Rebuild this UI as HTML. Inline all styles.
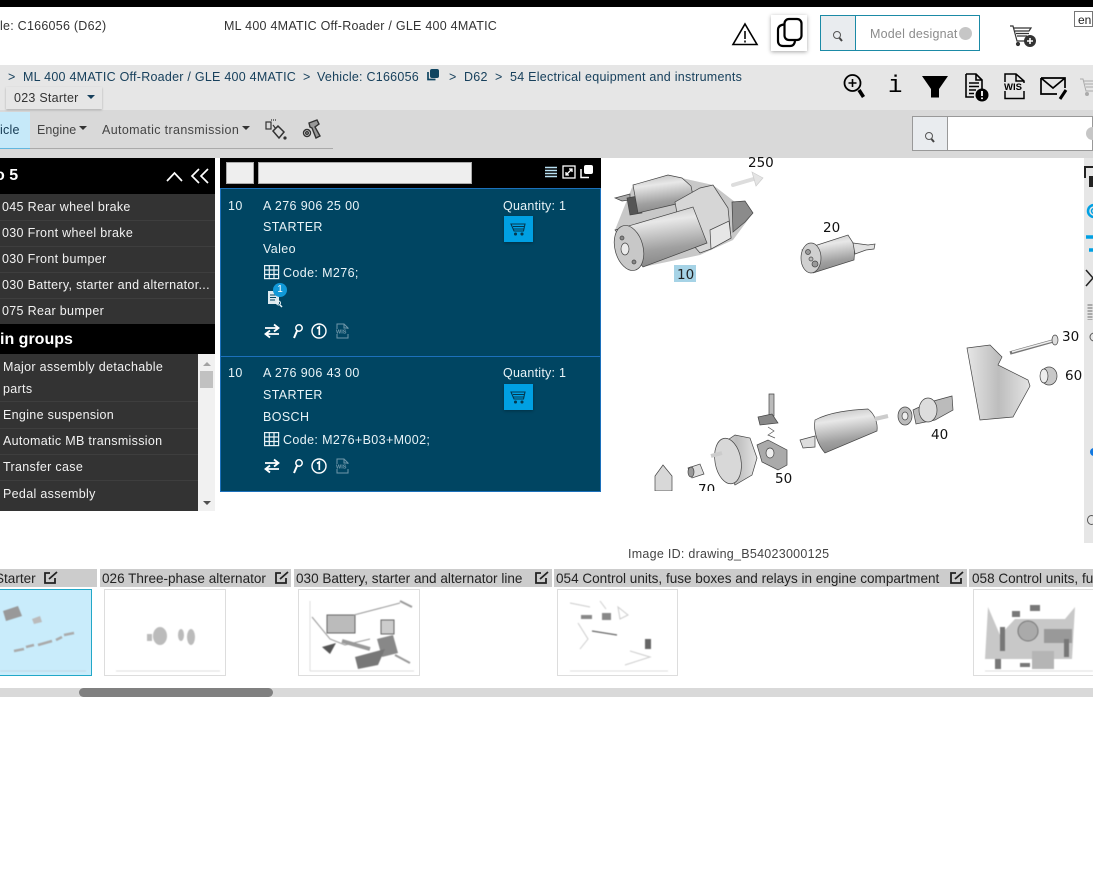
<!DOCTYPE html>
<html><head><meta charset="utf-8"><style>
html,body{margin:0;padding:0;background:#fff}
body{width:1093px;height:872px;position:relative;overflow:hidden;font-family:"Liberation Sans",sans-serif;font-size:12.5px;color:#333}
.a,.t{position:absolute}
.t{white-space:nowrap;line-height:16px;letter-spacing:.25px}
.n{color:#17405c}
.w{color:#f2f2f2;letter-spacing:.32px}
.p{color:#e8f3f7;letter-spacing:.38px}
.l{font-size:13.55px;color:#222;line-height:18px;letter-spacing:0}
.h{background:#ccc;height:18px;top:569px}
.b{position:absolute;top:589px;height:85px;border:1px solid #ddd;background:#fff}
svg{position:absolute;overflow:visible}
</style></head><body>
<div class="a" style="left:0;top:0;width:1093px;height:7px;background:#000"></div>
<div class="t" style="left:0;top:18px;color:#333">le: C166056 (D62)</div>
<div class="t" style="left:224px;top:18px;color:#333">ML 400 4MATIC Off-Roader / GLE 400 4MATIC</div>

<svg style="left:732px;top:22px" width="26" height="24"><path d="M13 2 L25 22.500 H1 Z" fill="none" stroke="#000" stroke-width="1.600"/><path d="M13 9v8M13 18.500v2" stroke="#222" stroke-width="1.800"/></svg>
<div class="a" style="left:771px;top:15px;width:36px;height:36px;background:#fff;box-shadow:0 1px 4px rgba(0,0,0,.35)"></div>
<svg style="left:776px;top:17px" width="28" height="32" fill="none" stroke="#000" stroke-width="2.200"><rect x="8.500" y="2" width="17" height="21" rx="4.500"/><path d="M8 7.500C3.500 8 2 10 2 13V24C2 27 4 29 7 29H14C17 29 18.500 27.500 19 24"/></svg>

<div class="a" style="left:820px;top:15px;width:158px;height:34px;border:1px solid #1b8aa6"></div>
<div class="a" style="left:821px;top:16px;width:34px;height:34px;background:#e9ecef;border-right:1px solid #1b8aa6"></div>
<svg style="left:832px;top:30px" width="12" height="13" fill="none" stroke="#555"><circle cx="5" cy="5" r="3.500"/><path d="M7.500 8L10 11" stroke-width="2" stroke="#444"/></svg>
<div class="t" style="left:870px;top:26px;color:#8b8b8b;width:89px;overflow:hidden;letter-spacing:.2px">Model designat</div>
<div class="a" style="left:959px;top:27px;width:13px;height:13px;border-radius:50%;background:#c6c6c6"></div>
<svg style="left:1009px;top:24px" width="30" height="25" fill="none" stroke="#333" stroke-width="1.200"><path d="M1 2H4L8 17H20M5 4H22L20 7H6M7 9.500H20M8 12H18"/><circle cx="9" cy="20" r="1.500" fill="#333"/><circle cx="21" cy="17" r="6" fill="#333" stroke="none"/><path d="M21 14v6M18 17h6" stroke="#fff" stroke-width="1.600"/></svg>
<div class="a" style="left:1074px;top:11px;width:19px;height:16px;border:1px solid #767676;background:#fff;font-size:12px;line-height:16px;color:#222;padding-left:3px;box-sizing:border-box">en</div>

<div class="a" style="left:0;top:65px;width:1093px;height:45px;background:#e6e6e6"></div>
<div class="a" style="left:0;top:110px;width:1093px;height:48px;background:#d9d9d9"></div>
<div class="t n" style="left:8px;top:69px">&gt;</div>
<div class="t n" style="left:23px;top:69px">ML 400 4MATIC Off-Roader / GLE 400 4MATIC</div>
<div class="t n" style="left:303px;top:69px">&gt;</div>
<div class="t n" style="left:317px;top:69px">Vehicle: C166056</div>
<svg style="left:426px;top:68px" width="14" height="14"><rect x="4" y="1" width="9" height="9" rx="2" fill="#0f4460"/><path d="M2 4V11.500H9.500" fill="none" stroke="#0f4460" stroke-width="1.700"/></svg>
<div class="t n" style="left:449px;top:69px">&gt;</div>
<div class="t n" style="left:464px;top:69px">D62</div>
<div class="t n" style="left:495px;top:69px">&gt;</div>
<div class="t n" style="left:510px;top:69px">54 Electrical equipment and instruments</div>
<div class="a" style="left:6px;top:87px;width:96px;height:22px;background:#e6e6e6;box-shadow:0 1px 2px rgba(0,0,0,.25)"></div>
<div class="t n" style="left:14px;top:90px;color:#333">023 Starter</div>
<div class="a" style="left:87px;top:95px;border:4px solid transparent;border-top:4px solid #17405c;border-bottom:0"></div>

<svg style="left:843px;top:73px" width="22" height="27" fill="none" stroke="#000"><circle cx="9.500" cy="10" r="8" stroke-width="1.800"/><path d="M9.500 6v8M5.500 10h8" stroke-width="1.600"/><path d="M16 17L20.500 24" stroke-width="3.600"/></svg>
<div class="t" style="left:888px;top:74px;font:24px/26px 'Liberation Mono',monospace;color:#000;letter-spacing:0">i</div>
<svg style="left:922px;top:76px" width="26" height="22"><path d="M0 0H26L17 13V21.500H9V13Z" fill="#000"/></svg>
<svg style="left:965px;top:73px" width="26" height="29" fill="none" stroke="#000" stroke-width="1.600"><path d="M1 1H11L17 7V19M11 1V7H17M1 1V24H9M4 10H14M4 13.500H14M4 17H11M4 20.500H9"/><circle cx="17" cy="22" r="6.500" fill="#000" stroke="none"/><path d="M17 18v5M17 24.500v1.600" stroke="#fff" stroke-width="1.800"/></svg>
<svg style="left:1004px;top:73px" width="22" height="27" fill="none" stroke="#000" stroke-width="1.500"><path d="M1 9V1H12L20 8V10M12 1V8H20M1 18V25.500H20V18"/><text x="0" y="17" font-family="Liberation Sans,sans-serif" font-size="9.500" font-weight="700" fill="#000" stroke="none">WIS</text></svg>
<svg style="left:1040px;top:76px" width="28" height="25" fill="none" stroke="#000" stroke-width="1.700"><path d="M1 2H25V12M1 2V18H17M1 2L13 12L25 2"/><path d="M20 23L26 14" stroke-width="3"/></svg>
<svg style="left:1080px;top:78px" width="16" height="20" fill="none" stroke="#aaa"><path d="M0 1H3L6 13H15M4 3H20M5 6H18M6 9H16"/><circle cx="7" cy="16" r="1.500" fill="#aaa"/></svg>

<div class="a" style="left:0;top:112px;width:30px;height:37px;background:#c6e9f9"></div>
<div class="a" style="left:0;top:148px;width:333px;height:1px;background:#aaa"></div>
<div class="a" style="left:0;top:148px;width:30px;height:1px;background:#62b7df"></div>
<div class="t n" style="left:0;top:122px;color:#163a52">icle</div>
<div class="t" style="left:37px;top:122px;color:#444;letter-spacing:.05px">Engine</div>
<div class="a" style="left:79px;top:126px;border:4px solid transparent;border-top:4px solid #333;border-bottom:0"></div>
<div class="t" style="left:102px;top:122px;color:#444;letter-spacing:.36px">Automatic transmission</div>
<div class="a" style="left:242px;top:126px;border:4px solid transparent;border-top:4px solid #333;border-bottom:0"></div>
<svg style="left:264px;top:118px" width="24" height="24" fill="none" stroke="#333" stroke-width="1.200"><rect x="2" y="4" width="5" height="7"/><path d="M7 2H12" stroke-dasharray="1 1"/><path d="M9 13L14 8L20 14L15 20Z" stroke-width="1.500"/><path d="M9 7L12 11" stroke="#333"/><circle cx="21" cy="20" r="1" fill="#333"/></svg>
<svg style="left:301px;top:118px" width="22" height="24" fill="none" stroke="#333" stroke-width="1.400"><path d="M8 5L16 2L18 6L14 9L19 18L15 20L11 10L9 9Z" fill="#999"/><circle cx="6" cy="15" r="3.500"/><circle cx="6" cy="15" r="1.300"/></svg>

<div class="a" style="left:912px;top:116px;width:181px;height:35px;background:#fff;border:1px solid #999;box-sizing:border-box"></div>
<div class="a" style="left:913px;top:117px;width:34px;height:33px;background:#e9ecef;border-right:1px solid #999"></div>
<svg style="left:924px;top:131px" width="12" height="13" fill="none" stroke="#555"><circle cx="5" cy="5" r="3.500"/><path d="M7.500 8L10 11" stroke-width="2" stroke="#444"/></svg>
<div class="a" style="left:1086px;top:127px;width:13px;height:13px;border-radius:50%;background:#c6c6c6"></div>

<div class="a" style="left:0;top:158px;width:215px;height:36px;background:#000"></div>
<div class="t" style="left:-5px;top:167px;font-size:16px;font-weight:700;color:#fff;line-height:18px;letter-spacing:0">o 5</div>
<svg style="left:166px;top:168px" width="44" height="16" fill="none" stroke="#fff" stroke-width="1.700"><path d="M1 13L8.500 5L16 13M33 1L26 8L33 15M42 1L35 8L42 15"/></svg>
<div class="a" style="left:0;top:194px;width:215px;height:130px;background:#333"></div>
<div class="t w" style="left:2px;top:199px">045 Rear wheel brake</div>
<div class="a" style="left:0;top:220px;width:215px;height:1px;background:#3e3e3e"></div>
<div class="t w" style="left:2px;top:225px">030 Front wheel brake</div>
<div class="a" style="left:0;top:246px;width:215px;height:1px;background:#3e3e3e"></div>
<div class="t w" style="left:2px;top:251px">030 Front bumper</div>
<div class="a" style="left:0;top:272px;width:215px;height:1px;background:#3e3e3e"></div>
<div class="t w" style="left:2px;top:277px">030 Battery, starter and alternator...</div>
<div class="a" style="left:0;top:298px;width:215px;height:1px;background:#3e3e3e"></div>
<div class="t w" style="left:2px;top:303px">075 Rear bumper</div>
<div class="a" style="left:0;top:324px;width:215px;height:30px;background:#000"></div>
<div class="t" style="left:0;top:331px;font-size:16px;font-weight:700;color:#fff;line-height:18px;letter-spacing:0">in groups</div>
<div class="a" style="left:0;top:354px;width:198px;height:157px;background:#333"></div>
<div class="a" style="left:198px;top:354px;width:17px;height:157px;background:#f1f1f1"></div>
<div class="a" style="left:200px;top:371px;width:13px;height:17px;background:#c1c1c1"></div>
<div class="a" style="left:203px;top:362px;border:4px solid transparent;border-bottom:4px solid #a3a3a3;border-top:0"></div>
<div class="a" style="left:203px;top:501px;border:4px solid transparent;border-top:4px solid #505050;border-bottom:0"></div>
<div class="t w" style="left:3px;top:359px">Major assembly detachable</div>
<div class="t w" style="left:3px;top:381px">parts</div>
<div class="a" style="left:0;top:401px;width:198px;height:1px;background:#3e3e3e"></div>
<div class="t w" style="left:3px;top:407px">Engine suspension</div>
<div class="a" style="left:0;top:428px;width:198px;height:1px;background:#3e3e3e"></div>
<div class="t w" style="left:3px;top:433px">Automatic MB transmission</div>
<div class="a" style="left:0;top:454px;width:198px;height:1px;background:#3e3e3e"></div>
<div class="t w" style="left:3px;top:459px">Transfer case</div>
<div class="a" style="left:0;top:480px;width:198px;height:1px;background:#3e3e3e"></div>
<div class="t w" style="left:3px;top:486px">Pedal assembly</div>

<div class="a" style="left:220px;top:158px;width:381px;height:31px;background:#000"></div>
<div class="a" style="left:226px;top:162px;width:28px;height:22px;background:#eee;box-sizing:border-box;border:1px solid #aaa"></div>
<div class="a" style="left:258px;top:162px;width:214px;height:22px;background:#eee;box-sizing:border-box;border:1px solid #aaa"></div>
<svg style="left:544px;top:165px" width="50" height="16" fill="none"><path d="M1 2.500h12M1 5.500h12M1 8.500h12M1 11.500h12" stroke="#b9e1f3" stroke-width="1.500"/><rect x="19" y="1" width="12" height="12" stroke="#fff" stroke-width="1.300"/><path d="M22 10L28 4M25 4h3v3M22 7v3h3" stroke="#fff" stroke-width="1.300"/><rect x="40" y="0" width="9" height="9" rx="2" fill="#fff"/><path d="M37 4V12.500H45" stroke="#fff" stroke-width="1.500"/></svg>

<div class="a" style="left:220px;top:188px;width:381px;height:304px;background:#004562;border:1px solid #1c70bb;box-sizing:border-box"></div>
<div class="a" style="left:221px;top:356px;width:379px;height:1px;background:#1c70bb"></div>
<div class="t p" style="left:228px;top:198px">10</div>
<div class="t p" style="left:263px;top:198px">A 276 906 25 00</div>
<div class="t p" style="left:503px;top:198px;letter-spacing:.25px">Quantity: 1</div>
<div class="t p" style="left:263px;top:219px">STARTER</div>
<div class="t p" style="left:263px;top:241px">Valeo</div>
<svg style="left:264px;top:265px" width="16" height="15" fill="none" stroke="#e8f3f7" stroke-width="1.200"><rect x=".6" y=".6" width="14" height="13"/><path d="M.6 5h14M.6 9.500h14M5.300 .6v13M10 .6v13"/></svg>
<div class="t p" style="left:283px;top:265px">Code: M276;</div>
<svg style="left:266px;top:284px" width="24" height="24"><path d="M2 7H10L13 10V20H2Z" fill="#dfeaef"/><path d="M4 11H10M4 13.500H10M4 16H9" stroke="#004562"/><circle cx="12.500" cy="19" r="2" fill="none" stroke="#e8f3f7"/><path d="M14 21L16 23" stroke="#e8f3f7" stroke-width="1.500"/></svg>
<div class="a" style="left:273px;top:283px;width:14px;height:14px;border-radius:50%;background:#1199d8;color:#fff;font-size:10px;line-height:14px;text-align:center">1</div>
<svg style="left:264px;top:323px" width="16" height="16" fill="none" stroke="#fff" stroke-width="1.800"><path d="M1 5H14M10 1.500L14.500 5L10 8.500M15 11H2M6 7.500L1.500 11L6 14.500"/></svg>
<svg style="left:291px;top:323px" width="14" height="16" fill="none" stroke="#fff" stroke-width="1.500"><circle cx="8" cy="5" r="3.200"/><path d="M6 8L3 15" stroke-width="2"/></svg>
<svg style="left:311px;top:323px" width="16" height="16" fill="none" stroke="#fff" stroke-width="1.400"><circle cx="8" cy="8" r="7"/><path d="M6 5.500L8.300 4V12" stroke-width="1.700"/></svg>
<svg style="left:336px;top:323px" width="13" height="16" fill="none" stroke="#6f97a9"><path d="M1 6V1H8L12 5V6M8 1V5H12M1 11V15H12V11"/><text x="0" y="10.500" font-size="5.500" font-weight="700" font-family="Liberation Sans,sans-serif" fill="#6f97a9" stroke="none">WIS</text></svg>
<div class="a" style="left:504px;top:216px;width:29px;height:26px;background:#00a0e3;box-shadow:0 1px 3px rgba(0,0,0,.3)"></div>
<svg style="left:511px;top:223px" width="16" height="13" fill="none" stroke="#04384f" stroke-width="1.100"><path d="M0 1H14L12.500 8H3ZM2 3.500H13M2.500 6H12.500"/><circle cx="4.500" cy="11" r="1" fill="#04384f"/><circle cx="11" cy="11" r="1" fill="#04384f"/></svg>

<div class="t p" style="left:228px;top:365px">10</div>
<div class="t p" style="left:263px;top:365px">A 276 906 43 00</div>
<div class="t p" style="left:503px;top:365px;letter-spacing:.25px">Quantity: 1</div>
<div class="t p" style="left:263px;top:387px">STARTER</div>
<div class="t p" style="left:263px;top:409px">BOSCH</div>
<svg style="left:264px;top:432px" width="16" height="15" fill="none" stroke="#e8f3f7" stroke-width="1.200"><rect x=".6" y=".6" width="14" height="13"/><path d="M.6 5h14M.6 9.500h14M5.300 .6v13M10 .6v13"/></svg>
<div class="t p" style="left:283px;top:432px">Code: M276+B03+M002;</div>
<svg style="left:264px;top:458px" width="16" height="16" fill="none" stroke="#fff" stroke-width="1.800"><path d="M1 5H14M10 1.500L14.500 5L10 8.500M15 11H2M6 7.500L1.500 11L6 14.500"/></svg>
<svg style="left:291px;top:458px" width="14" height="16" fill="none" stroke="#fff" stroke-width="1.500"><circle cx="8" cy="5" r="3.200"/><path d="M6 8L3 15" stroke-width="2"/></svg>
<svg style="left:311px;top:458px" width="16" height="16" fill="none" stroke="#fff" stroke-width="1.400"><circle cx="8" cy="8" r="7"/><path d="M6 5.500L8.300 4V12" stroke-width="1.700"/></svg>
<svg style="left:336px;top:458px" width="13" height="16" fill="none" stroke="#6f97a9"><path d="M1 6V1H8L12 5V6M8 1V5H12M1 11V15H12V11"/><text x="0" y="10.500" font-size="5.500" font-weight="700" font-family="Liberation Sans,sans-serif" fill="#6f97a9" stroke="none">WIS</text></svg>
<div class="a" style="left:504px;top:384px;width:29px;height:26px;background:#00a0e3;box-shadow:0 1px 3px rgba(0,0,0,.3)"></div>
<svg style="left:511px;top:391px" width="16" height="13" fill="none" stroke="#04384f" stroke-width="1.100"><path d="M0 1H14L12.500 8H3ZM2 3.500H13M2.500 6H12.500"/><circle cx="4.500" cy="11" r="1" fill="#04384f"/><circle cx="11" cy="11" r="1" fill="#04384f"/></svg>

<svg style="left:601px;top:158px" width="483" height="333" viewBox="601 158 483 333">
<defs>
<linearGradient id="g" x1="0.100" y1="0" x2="0.300" y2="1"><stop offset="0" stop-color="#bdbdbd"/><stop offset=".3" stop-color="#e8e8e8"/><stop offset=".75" stop-color="#a0a0a0"/><stop offset="1" stop-color="#8a8a8a"/></linearGradient>
<linearGradient id="g2" x1="0" y1="0" x2="1" y2="0"><stop offset="0" stop-color="#e6e6e6"/><stop offset=".5" stop-color="#bdbdbd"/><stop offset="1" stop-color="#e4e4e4"/></linearGradient>
</defs>
<path d="M633 185L668 175L713 185L735 202L753 213L733 240L700 255L643 267L615 230Z" fill="#c8c8c8"/>
<g stroke="#444" stroke-width=".7">
<path d="M733 185L757 178" stroke="#ddd" stroke-width="4" fill="none" stroke-linecap="round"/>
<path d="M752 172L763 178L756 186Z" fill="#e4e4e4" stroke="#ccc"/>
<path d="M615 198L630 194V200L622 201Z" fill="#aaa"/>
<path d="M627 198L638 196L642 213L630 215Z" fill="#555"/>
<path d="M633 185L668 175L682 178L691 186L693 196L676 204L638 213Z" fill="url(#g)"/>
<path d="M732 202L745 201L753 213L745 222L733 232Z" fill="#8b8b8b"/>
<path d="M675 202L700 188L713 185L728 208L731 238L711 249L700 253L680 230Z" fill="#d6d6d6"/>
<path d="M710 230L729 221L731 238L711 249Z" fill="#e6e6e6"/>
<path d="M615 230L693 207L707 243L643 267Z" fill="url(#g)"/>
<ellipse cx="629" cy="248" rx="14" ry="23" transform="rotate(-15 629 248)" fill="#c8c8c8"/>
<ellipse cx="625" cy="249" rx="4" ry="6" fill="#eaeaea"/>
<circle cx="622" cy="238" r="2" fill="#888"/><circle cx="634" cy="262" r="2" fill="#888"/>
<path d="M802 250L848 235L855 246L854 260L813 273Z" fill="url(#g)"/>
<ellipse cx="811" cy="258" rx="10" ry="15" fill="#d0d0d0"/>
<circle cx="808" cy="252" r="2.500" fill="#999"/><circle cx="815" cy="264" r="3" fill="#999"/><circle cx="811" cy="259" r="2" fill="#bbb"/>
<path d="M853 243L868 245L875 244L874 249L866 250L855 254Z" fill="#e2e2e2"/>
<path d="M1010 353L1053 341" stroke="#777" stroke-width="3.500" fill="none"/>
<path d="M1012 352L1052 341" stroke="#eee" stroke-width="1.500" fill="none"/>
<ellipse cx="1055" cy="340" rx="3" ry="5" fill="#ddd"/>
<path d="M967 348L990 345L1002 357L998 365L1028 380L1030 386L1013 417L980 420Z" fill="url(#g2)"/>
<ellipse cx="1049" cy="376" rx="8" ry="9" fill="#c8c8c8"/><ellipse cx="1044" cy="376" rx="4" ry="7" fill="#eee"/>
<path d="M800 440L815 436L815 447L803 448Z" fill="#ddd"/>
<path d="M815 420C830 412 850 410 868 409C875 414 878 424 877 431L825 453C818 445 813 432 815 420Z" fill="url(#g)"/>
<path d="M875 419L888 416" stroke="#ccc" stroke-width="4"/>
<ellipse cx="905" cy="416" rx="7" ry="9" fill="#bbb"/><ellipse cx="905" cy="416" rx="3" ry="4" fill="#eee"/>
<path d="M913 410L930 402L952 396L953 410L935 420L916 424Z" fill="#bbb"/>
<ellipse cx="928" cy="410" rx="9" ry="12" fill="#ddd"/>
<path d="M769 394H774V416H769Z" fill="#bbb"/><path d="M758 417L772 414L778 423L760 425Z" fill="#888"/>
<path d="M768 427L774 431L768 435L775 438" fill="none" stroke="#555"/>
<path d="M757 445L768 440L787 450L787 465L778 470L762 462Z" fill="#aaa"/>
<ellipse cx="770" cy="453" rx="4" ry="5" fill="#eee"/>
<path d="M716 448L735 435L750 438L757 458L752 475L735 485Z" fill="url(#g2)"/>
<ellipse cx="728" cy="461" rx="13" ry="23" transform="rotate(-10 728 461)" fill="#d8d8d8"/>
<path d="M711 456L722 453" stroke="#ccc" stroke-width="4"/>
<path d="M688 468L700 464L704 474L692 478Z" fill="#ddd"/><ellipse cx="691" cy="472" rx="3" ry="5" fill="#999"/>
<path d="M655 491V476L663 465L672 476V491Z" fill="#d8d8d8"/>
</g>
<g font-family="DejaVu Sans,sans-serif" font-size="13.500" fill="#111">
<text x="748" y="167">250</text><text x="823" y="232">20</text><text x="1062" y="341">30</text><text x="1065" y="380">60</text><text x="931" y="439">40</text><text x="775" y="483">50</text><text x="698" y="494">70</text>
</g>
<rect x="674" y="265" width="22" height="17" fill="#a6d3e6"/>
<text x="677" y="279" font-family="DejaVu Sans,sans-serif" font-size="13.500" fill="#222">10</text>
</svg>
<div class="a" style="left:601px;top:491px;width:483px;height:12px;background:#fff"></div>

<div class="a" style="left:1084px;top:158px;width:9px;height:385px;background:#e6e6e6"></div>
<svg style="left:1084px;top:158px" width="9" height="350" fill="none"><path d="M1 20V9H9" stroke="#222" stroke-width="2"/><rect x="5" y="18" width="4" height="11" fill="#222"/><circle cx="10" cy="53" r="6" stroke="#00a0e3" stroke-width="2.500"/><circle cx="10" cy="53" r="2.500" stroke="#00a0e3" stroke-width="1.500"/><path d="M2 79H9M5 92H9" stroke="#00a0e3" stroke-width="3.500"/><path d="M2 112L9 120M2 128L9 120" stroke="#222" stroke-width="1.500"/><path d="M6 146v16" stroke="#aaa" stroke-width="5" stroke-dasharray="2 1"/><circle cx="10" cy="179" r="4" stroke="#555"/><circle cx="10" cy="294" r="4" fill="#1178e0"/></svg>
<div class="a" style="left:1087px;top:515px;width:7px;height:8px;border:1px solid #555;border-radius:50%"></div>

<div class="t" style="left:628px;top:546px;font-size:12.500px;color:#444;letter-spacing:.27px">Image ID: drawing_B54023000125</div>

<div class="a h" style="left:0;width:97px"></div>
<div class="a h" style="left:100px;width:191px"></div>
<div class="a h" style="left:294px;width:258px"></div>
<div class="a h" style="left:554px;width:413px"></div>
<div class="a h" style="left:969px;width:124px"></div>
<div class="t l" style="left:-5px;top:570px">Starter</div>
<div class="t l" style="left:102px;top:570px">026 Three-phase alternator</div>
<div class="t l" style="left:296px;top:570px">030 Battery, starter and alternator line</div>
<div class="t l" style="left:556px;top:570px">054 Control units, fuse boxes and relays in engine compartment</div>
<div class="t l" style="left:972px;top:570px">058 Control units, fuse</div>
<svg style="left:0;top:0" width="1093" height="590" fill="none" stroke="#222" stroke-width="1.800"><path d="M50 573H45V583H55V578M49 579L57 572"/><path d="M281 573H276V583H286V578M280 579L288 572"/><path d="M541 573H536V583H546V578M540 579L548 572"/><path d="M956 573H951V583H961V578M955 579L963 572"/></svg>

<div class="a" style="left:-2px;top:589px;width:94px;height:87px;background:#c9ecfb;border:1px solid #22a8c8;box-sizing:border-box"></div>
<div class="b" style="left:104px;width:120px"></div>
<div class="b" style="left:298px;width:120px"></div>
<div class="b" style="left:557px;width:119px"></div>
<div class="b" style="left:973px;width:122px"></div>

<svg style="left:0;top:589px;filter:blur(.5px)" width="1093" height="87" fill="none">
<path d="M3 22L18 17L22 27L6 32Z" fill="#999"/><path d="M32 30L40 27L42 33L34 35Z" fill="#bbb"/>
<path d="M14 62L24 60M26 58L34 56M38 56L52 52M56 51L62 48M64 46L74 44" stroke="#aaa" stroke-width="2.500"/>
<path d="M0 82H86" stroke="#c0d8e4"/>
<path d="M116 82H220" stroke="#ddd"/>
<g fill="#bbb"><ellipse cx="160" cy="47" rx="7" ry="9"/><ellipse cx="181" cy="46" rx="3" ry="6"/><ellipse cx="191" cy="48" rx="4" ry="8"/><rect x="147" y="45" width="5" height="7"/></g>
<path d="M310 82H414M310 12V82" stroke="#ddd"/>
<rect x="327" y="26" width="28" height="18" fill="#bbb" stroke="#666"/>
<path d="M312 28L330 50L345 56L370 50M354 26L400 14" stroke="#999"/>
<path d="M322 58L336 54L330 65Z" fill="#555"/>
<rect x="381" y="31" width="13" height="14" fill="#ccc" stroke="#666"/>
<path d="M377 50L393 46L398 64L382 68Z" fill="#888"/>
<path d="M355 68L385 60L378 76L358 80Z" fill="#777"/>
<path d="M400 12L412 18M395 66L410 74" stroke="#999" stroke-width="2"/>
<path d="M342 52L370 60" stroke="#999" stroke-width="4"/>
<path d="M570 82H668" stroke="#ddd"/>
<g fill="#888"><rect x="581" y="26" width="11" height="4"/><rect x="602" y="24" width="9" height="7"/><rect x="645" y="50" width="6" height="10" fill="#666"/></g>
<path d="M592 42L617 46" stroke="#666" stroke-width="1.200"/>
<g stroke="#ccc"><path d="M570 14L590 18M600 12L606 20M618 18L628 26L620 30ZM578 34L588 50L580 60M630 62L650 68L625 76"/></g>
<path d="M985 82H1093" stroke="#ddd"/>
<path d="M988 18L1000 46L1015 30H1065L1075 18L1072 70H985Z" fill="#c8c8c8"/>
<circle cx="1028" cy="42" r="10" fill="#aaa" stroke="#777"/>
<rect x="1032" y="62" width="22" height="18" fill="#b5b5b5"/>
<rect x="1044" y="40" width="28" height="14" fill="#999"/>
<g fill="#777"><rect x="1012" y="22" width="8" height="6"/><rect x="1030" y="16" width="10" height="6"/><rect x="995" y="70" width="6" height="10"/><rect x="1000" y="38" width="5" height="24"/><rect x="1064" y="50" width="5" height="18"/><rect x="1020" y="74" width="10" height="4"/></g>
</svg>

<div class="a" style="left:0;top:688px;width:1093px;height:9px;background:#d9d9d9"></div>
<div class="a" style="left:79px;top:688px;width:194px;height:9px;background:#808080;border-radius:5px"></div>
</body></html>
